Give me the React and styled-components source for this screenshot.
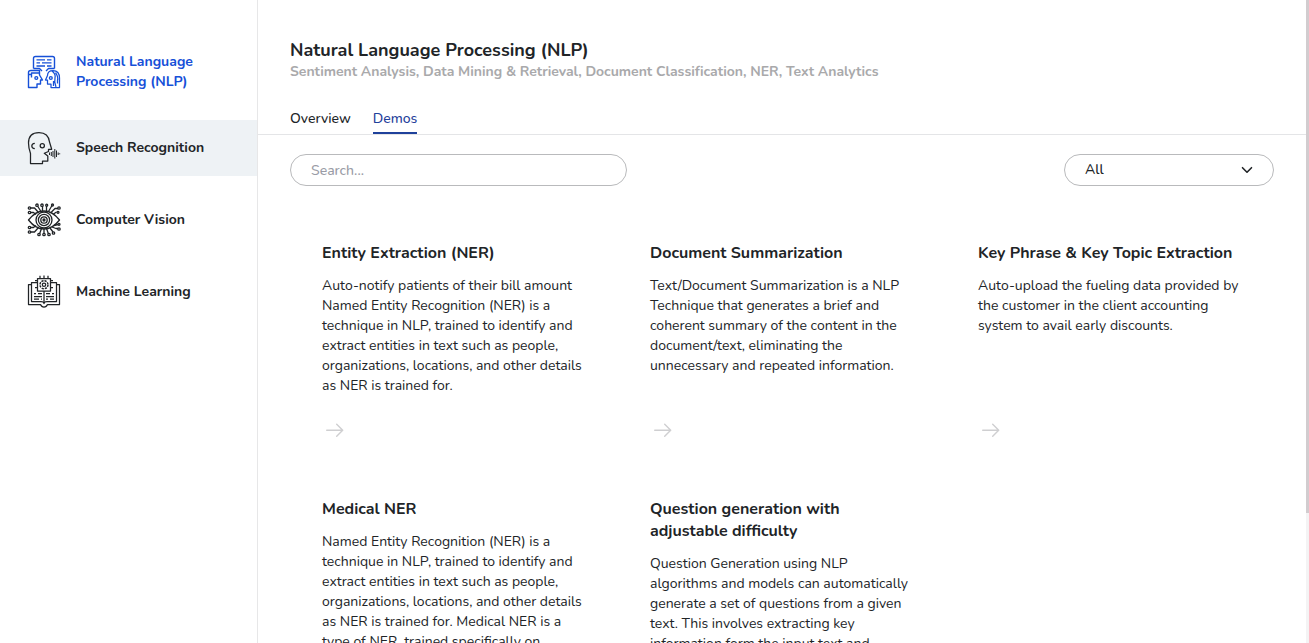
import React from "react";
import styled, { createGlobalStyle } from "styled-components";

const GlobalStyle = createGlobalStyle`
  * { box-sizing: border-box; }
  body {
    margin: 0;
    background: #fff;
    color: #212427;
    font-family: Nunito, Lato, sans-serif;
    font-size: 14px;
    line-height: 20px;
    overflow: hidden;
  }
  h1, h2, p { margin: 0; }
`;

const Page = styled.div`
  display: flex;
  height: 643px;
  overflow: hidden;
`;

const Sidebar = styled.nav`
  flex: none;
  width: 258px;
  border-right: 1px solid #e7e7e8;
  padding-top: 40px;
  display: flex;
  flex-direction: column;
  gap: 16px;
`;

const NavItem = styled.a`
  display: flex;
  align-items: center;
  gap: 15px;
  height: ${(p) => (p.$tall ? 64 : 56)}px;
  padding-left: 27px;
  background: ${(p) => (p.$hovered ? "#eef2f5" : "transparent")};
  color: ${(p) => (p.$active ? "#1650d8" : "#212427")};
  font-weight: 700;
`;

const NavLabel = styled.span`
  width: 140px;
  padding-bottom: 1px;
`;

const NavIcon = styled.svg`
  flex: none;
  width: 34px;
  height: 34px;
  fill: none;
  stroke: currentColor;
  stroke-width: ${(p) => p.$weight || 1.3};
  stroke-linejoin: round;
`;

const Main = styled.main`
  flex: 1;
  min-width: 0;
  display: flex;
  flex-direction: column;
`;

const Header = styled.header`
  flex: none;
  height: 135px;
  padding: 39px 32px 0;
  border-bottom: 1px solid #e4e5e7;
`;

const Title = styled.h1`
  font-size: 18px;
  line-height: 23px;
  font-weight: 700;
`;

const Subtitle = styled.p`
  color: #a9a9ab;
  font-weight: 700;
  letter-spacing: -0.01px;
`;

const Tabs = styled.div`
  display: flex;
  gap: 22px;
  margin-top: 22px;
`;

const Tab = styled.a`
  height: 30px;
  padding-top: 5px;
  font-weight: 500;
  color: ${(p) => (p.$selected ? "#1f419b" : "#212427")};
  border-bottom: 2px solid ${(p) => (p.$selected ? "#1f419b" : "transparent")};
`;

const Filters = styled.div`
  flex: none;
  display: flex;
  justify-content: space-between;
  padding: 19px 32px 0;
`;

const Search = styled.input`
  width: 337px;
  height: 32px;
  padding: 0 20px;
  border: 1px solid #b9babc;
  border-radius: 16px;
  font: inherit;
  font-weight: 500;
  &::placeholder { color: #9a9ca6; opacity: 1; }
`;

const Select = styled.div`
  display: flex;
  align-items: center;
  justify-content: space-between;
  width: 210px;
  height: 32px;
  padding: 0 20px;
  border: 1px solid #b9babc;
  border-radius: 16px;
  font-weight: 500;
`;

const Chevron = styled.svg`
  width: 12px;
  height: 8px;
  fill: none;
  stroke: #212427;
  stroke-width: 1.6;
  stroke-linecap: round;
  stroke-linejoin: round;
`;

const Cards = styled.section`
  display: grid;
  grid-template-columns: repeat(3, 328px);
  grid-auto-rows: 256px;
  padding: 56px 32px 0;
`;

const Card = styled.article`
  padding: 0 32px;
  display: flex;
  flex-direction: column;
`;

const CardTitle = styled.h2`
  font-size: 16px;
  line-height: 22px;
  font-weight: 700;
  white-space: pre-line;
`;

const CardText = styled.p`
  margin-top: 12px;
  min-height: 120px;
  white-space: pre-line;
`;

const Arrow = styled.svg`
  flex: none;
  width: 18px;
  height: 14px;
  margin: 27px 0 0 4px;
  fill: none;
  stroke: #cfcfd1;
  stroke-width: 1.4;
  stroke-linecap: round;
  stroke-linejoin: round;
`;

const ScrollTrack = styled.div`
  flex: none;
  width: 3px;
  background: #f4f3f4;
`;

const ScrollThumb = styled.div`
  height: 513px;
  background: #d2cccf;
`;

const NlpIcon = () => (
  <NavIcon viewBox="1 1 34 34" $weight={1.4}>
    <path d="M7.500 14.500V4.500Q7.500 2.500 9.500 2.500H26.500Q28.500 2.500 28.500 4.500V14.500M7.500 14.500H13.500L16 17M28.500 14.500H22.500L20 17" />
    <path d="M10.500 5.800h8.500M21 5.800h4.500M10.500 8.900h3.500M16 8.900h9.500M10.500 12h8.500M21 12h4.500" strokeWidth="1.300" />
    <path d="M2.500 33.500V18.500Q2.500 16.500 5 16.500H13.500V21L16.500 26H14.500V30H11V33.500ZM2.500 20.500H5.500V19H13.500M5.500 20.500v3" />
    <circle cx="10.300" cy="24" r="1.400" />
    <path d="M33.500 33.500V24Q33.500 16.500 27 16.500Q21.500 16.500 21.500 21.500L19.500 26H21.500V30H25V33.500ZM26 17q4 3 3 7t1 9M29.500 18.500q3 4 2 8v3M27.500 27v5" strokeWidth="1.250" />
    <circle cx="24.800" cy="24" r="1.400" />
  </NavIcon>
);

const SpeechIcon = () => (
  <NavIcon viewBox="1 1 34 34" $weight={1.25}>
    <path d="M4.500 33.500V23.500Q2.500 18 2.500 13Q2.500 2.500 13 2.500Q22.500 2.500 23.500 12L25.700 19.300H22.500V21.500L18.300 23.300L21.800 26V31H16.500V33.500Z" />
    <path d="M8.800 13.300Q5.800 13.500 5.800 16Q5.800 18.500 8.800 18.700" />
    <circle cx="16.300" cy="15.800" r="2.100" />
    <path d="M23.500 22.500v2.500M25.300 22v4M27 21v6M28.800 19v9.500M30.500 20.500v6.500M32.200 22.500v2.500M33.700 23.300v1" strokeWidth="1" />
  </NavIcon>
);

const VisionIcon = () => (
  <NavIcon viewBox="1 1.500 34 34" $weight={1.3}>
    <path d="M2.500 18.500Q9.500 9.500 18 9.500Q26.500 9.500 33.500 18.500Q26.500 27.500 18 27.500Q9.500 27.500 2.500 18.500Z" />
    <circle cx="18" cy="18.500" r="8" />
    <circle cx="18" cy="18.500" r="5.600" />
    <circle cx="18" cy="18.500" r="3.200" />
    <circle cx="18" cy="18.500" r="1" fill="currentColor" />
    <path d="M4.500 6.500h4l4 4.500M4.500 11h3l2.500 2M11.500 4.500l3.500 5.500M16.500 4.500v5M20.500 9.500v-5M22.500 10l3.500-6M25 11l4-4h3M27.500 12.500l3-2M4.500 30.500h4l4-4.500M4.500 26h3l2.500-2M13.500 32.500l2-5.500M18 32v-4.500M22.500 32.500L20.500 27M24 26.500l3 4M26 25.500l4 1.500h2M28 24l4-1" />
    <circle cx="3.500" cy="6.500" r="1.200" />
    <circle cx="3.500" cy="11" r="1.200" />
    <circle cx="11" cy="3.700" r="1.200" />
    <circle cx="16" cy="3.700" r="1.200" />
    <circle cx="20.700" cy="3.700" r="1" />
    <circle cx="26.500" cy="3.500" r="1" />
    <circle cx="33" cy="6.500" r="1.200" />
    <circle cx="32" cy="10.800" r="1" />
    <circle cx="3.500" cy="26" r="1.200" />
    <circle cx="3.500" cy="30.500" r="1.200" />
    <circle cx="13" cy="33" r="1.200" />
    <circle cx="18" cy="33" r="1.200" />
    <circle cx="23" cy="33" r="1.200" />
    <circle cx="27.500" cy="31.500" r="1.200" />
    <circle cx="33" cy="27.500" r="1.200" />
    <circle cx="33" cy="22.800" r="1" />
  </NavIcon>
);

const LearningIcon = () => (
  <NavIcon viewBox="1 1 34 34" $weight={1.25}>
    <path d="M11.500 8.500H5.500V27.500H15Q18 27.500 18 29.500Q18 27.500 21 27.500H30.500V8.500H24.500" />
    <path d="M5.500 10.500H2.500V30.500H14.500Q15.500 33 18 33Q20.500 33 21.500 30.500H33.500V10.500H30.500M18 17V28.500" />
    <path d="M11.500 4.500h13v12.500h-13zM14 4V1.800M18 4V1.500M22 4V1.800M11.500 6.500H9M11.500 13.500H9M24.500 6.500H27M24.500 13.500H27" />
    <circle cx="18" cy="10.700" r="4" strokeDasharray="2.200 0.940" strokeWidth="1.500" />
    <circle cx="18" cy="10.700" r="1.700" />
    <path d="M8 19.500h2M12 19.500h4M8 22.500h8M8 25h5M15 25h1M20 19.500h4M26 19.500h2M20 22.500h8M20 25h2M24 25h4" />
  </NavIcon>
);

const navItems = [
  { label: "Natural Language Processing (NLP)", Icon: NlpIcon, active: true },
  { label: "Speech Recognition", Icon: SpeechIcon, hovered: true },
  { label: "Computer Vision", Icon: VisionIcon },
  { label: "Machine Learning", Icon: LearningIcon },
];

const cards = [
  {
    title: "Entity Extraction (NER)",
    text: "Auto-notify patients of their bill amount\nNamed Entity Recognition (NER) is a\ntechnique in NLP, trained to identify and\nextract entities in text such as people,\norganizations, locations, and other details\nas NER is trained for.",
  },
  {
    title: "Document Summarization",
    text: "Text/Document Summarization is a NLP\nTechnique that generates a brief and\ncoherent summary of the content in the\ndocument/text, eliminating the\nunnecessary and repeated information.",
  },
  {
    title: "Key Phrase & Key Topic Extraction",
    text: "Auto-upload the fueling data provided by\nthe customer in the client accounting\nsystem to avail early discounts.",
  },
  {
    title: "Medical NER",
    text: "Named Entity Recognition (NER) is a\ntechnique in NLP, trained to identify and\nextract entities in text such as people,\norganizations, locations, and other details\nas NER is trained for. Medical NER is a\ntype of NER, trained specifically on",
  },
  {
    title: "Question generation with\nadjustable difficulty",
    text: "Question Generation using NLP\nalgorithms and models can automatically\ngenerate a set of questions from a given\ntext. This involves extracting key\ninformation form the input text and",
  },
];

export default function App() {
  return (
    <>
      <GlobalStyle />
      <Page>
        <Sidebar>
          {navItems.map(({ label, Icon, active, hovered }) => (
            <NavItem key={label} $active={active} $hovered={hovered} $tall={active}>
              <Icon />
              <NavLabel>{label}</NavLabel>
            </NavItem>
          ))}
        </Sidebar>
        <Main>
          <Header>
            <Title>Natural Language Processing (NLP)</Title>
            <Subtitle>
              Sentiment Analysis, Data Mining &amp; Retrieval, Document Classification, NER, Text Analytics
            </Subtitle>
            <Tabs>
              <Tab>Overview</Tab>
              <Tab $selected>Demos</Tab>
            </Tabs>
          </Header>
          <Filters>
            <Search placeholder="Search..." />
            <Select>
              All
              <Chevron viewBox="0 0 12 8">
                <path d="M1.500 1.700L6 6.200L10.500 1.700" />
              </Chevron>
            </Select>
          </Filters>
          <Cards>
            {cards.map(({ title, text }) => (
              <Card key={title}>
                <CardTitle>{title}</CardTitle>
                <CardText>{text}</CardText>
                <Arrow viewBox="0 0 18 14">
                  <path d="M0.700 7.300H16.700M10.700 1.300L16.700 7.300L10.700 13.300" />
                </Arrow>
              </Card>
            ))}
          </Cards>
        </Main>
        <ScrollTrack>
          <ScrollThumb />
        </ScrollTrack>
      </Page>
    </>
  );
}
